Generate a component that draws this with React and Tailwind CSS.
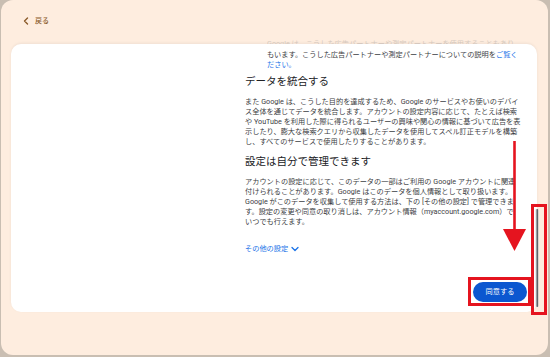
import React from "react";

const FONT = { fontFamily: '"Roboto", "Noto Sans CJK JP", "Noto Sans", sans-serif' };

function Line({ children, className = "" }) {
  return <div className={"whitespace-nowrap h-[10px] leading-[10px] " + className}>{children}</div>;
}

export default function App() {
  return (
    <div className="relative w-[550px] h-[357px] bg-[#c9beb2] overflow-hidden" style={FONT}>
      <div className="ml-[1px] w-[547px] h-[355px] rounded-[12px] bg-[#feeddf] pt-[15px] pl-[10px] pr-[11px] flex flex-col">
        {/* header */}
        <div className="h-[12px] flex items-center pl-[12px] gap-[6px] text-[#8a5a2a]">
          <svg width="6" height="8" viewBox="0 0 6 8" fill="none">
            <path d="M4.5 1 L1.5 4 L4.5 7" stroke="#8a5a2a" strokeWidth="1.4" strokeLinecap="round" strokeLinejoin="round" />
          </svg>
          <span className="text-[7px] font-medium leading-none">戻る</span>
        </div>

        {/* faint scrolled-away line */}
        <div className="mt-[13px] h-[4px] overflow-hidden pl-[256px] flex items-end">
          <div className="whitespace-nowrap text-[7.2px] leading-[10px] text-[#3c4043] opacity-20 translate-y-[5px]">
            Google は、こうした広告パートナーや測定パートナーを使用することもあり
          </div>
        </div>

        {/* card */}
        <div className="h-[268px] bg-white rounded-[10px] shadow-[0_-1px_3px_rgba(0,0,0,0.06)] flex flex-col pl-[234px] pr-[10px] pt-[6px] text-[#3c4043] text-[7.2px]">
          <div className="pl-[22px]">
            <Line>
              もいます。こうした広告パートナーや測定パートナーについての説明を<span className="text-[#1a73e8]">ご覧く</span>
            </Line>
            <Line className="text-[#1a73e8]">ださい。</Line>
          </div>

          <div className="mt-[5px] h-[14px] leading-[14px] text-[10.5px] text-[#202124] whitespace-nowrap">データを統合する</div>

          <div className="mt-[8px]">
            <Line>また Google は、こうした目的を達成するため、Google のサービスやお使いのデバイ</Line>
            <Line>ス全体を通じてデータを統合します。アカウントの設定内容に応じて、たとえば検索</Line>
            <Line>や YouTube を利用した際に得られるユーザーの興味や関心の情報に基づいて広告を表</Line>
            <Line>示したり、膨大な検索クエリから収集したデータを使用してスペル訂正モデルを構築</Line>
            <Line>し、すべてのサービスで使用したりすることがあります。</Line>
          </div>

          <div className="mt-[8px] h-[14px] leading-[14px] text-[10.5px] text-[#202124] whitespace-nowrap">設定は自分で管理できます</div>

          <div className="mt-[8px]">
            <Line>アカウントの設定に応じて、このデータの一部はご利用の Google アカウントに関連</Line>
            <Line>付けられることがあります。Google はこのデータを個人情報として取り扱います。</Line>
            <Line>Google がこのデータを収集して使用する方法は、下の [その他の設定] で管理できま</Line>
            <Line>す。設定の変更や同意の取り消しは、アカウント情報（myaccount.google.com）で</Line>
            <Line>いつでも行えます。</Line>
          </div>

          <div className="mt-[17px] h-[10px] flex items-center gap-[3px] text-[#1a73e8] text-[7.2px] leading-[10px] whitespace-nowrap">
            <span>その他の設定</span>
            <svg width="8" height="6" viewBox="0 0 8 6" fill="none">
              <path d="M1 1.5 L4 4.5 L7 1.5" stroke="#1a73e8" strokeWidth="1.3" strokeLinecap="round" strokeLinejoin="round" />
            </svg>
          </div>

          <div className="mt-auto mb-[10px] flex justify-end">
            <button className="w-[54px] h-[20px] rounded-full bg-[#0b57d0] text-white text-[7.2px] leading-none flex items-center justify-center">
              同意する
            </button>
          </div>
        </div>
      </div>

      {/* scrollbar + annotations overlay */}
      <svg className="absolute left-0 top-0 pointer-events-none" width="550" height="357" viewBox="0 0 550 357">
        <rect x="535.5" y="209" width="3" height="98" rx="1" fill="#d8d8d8" />
        <rect x="536.5" y="209" width="1.6" height="98" rx="0.8" fill="#5f6368" />
        <rect x="469.5" y="278.5" width="60" height="26" fill="none" stroke="#e5141f" strokeWidth="3" />
        <rect x="532.5" y="205.5" width="13" height="108" fill="none" stroke="#e5141f" strokeWidth="3" />
        <line x1="514.5" y1="141" x2="514.5" y2="231" stroke="#e5141f" strokeWidth="2.6" />
        <polygon points="503,229 526,229 514.5,251" fill="#e5141f" />
      </svg>
    </div>
  );
}
